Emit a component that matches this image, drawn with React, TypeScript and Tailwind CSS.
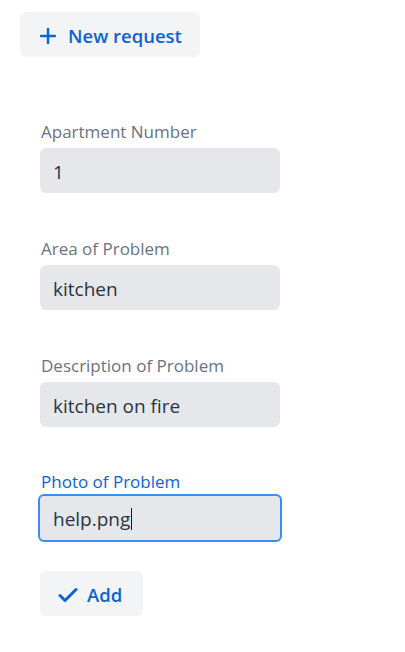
import React from "react";

const fields = [
  { label: "Apartment Number", value: "1" },
  { label: "Area of Problem", value: "kitchen" },
  { label: "Description of Problem", value: "kitchen on fire" },
];

export default function App() {
  return (
    <div className="w-[405px] h-[652px] bg-white" style={{ fontFamily: '"Open Sans", "Noto Sans", sans-serif' }}>
      <div className="pt-3 pl-5">
        <button className="flex items-center h-[45px] w-[180px] rounded-md bg-[#f3f4f6] pl-[20px] pt-[2px] text-[#0b63d6] text-[18.5px] font-semibold">
          <svg width="16" height="16" viewBox="0 0 16 16" className="mr-[12px]">
            <path d="M8 1v14M1 8h14" stroke="#0b63d6" strokeWidth="2.4" strokeLinecap="round" />
          </svg>
          New request
        </button>
      </div>
      <div className="pl-10 pt-[63px] flex flex-col">
        {fields.map((f) => (
          <div key={f.label} className="flex flex-col mb-[44px]">
            <label className="text-[17px] leading-6 text-[#6b7280] pl-[1px]">{f.label}</label>
            <div className="mt-[4px] w-[240px] h-[45px] rounded-md bg-[#e5e7eb] flex items-center pl-[13px] pt-[3px] text-[19px] text-[#2a3442]">
              {f.value}
            </div>
          </div>
        ))}
        <div className="flex flex-col -mt-[2px]">
          <label className="text-[17px] leading-6 text-[#0b63d6] pl-[1px] pt-[1px]">Photo of Problem</label>
          <div className="-ml-[2px] w-[244px] h-[48px] rounded-md bg-[#e5e7eb] border-2 border-[#3b8cf3] flex items-center pl-[13px] pt-[2px] text-[19px] text-[#2a3442]">
            help.png<span className="inline-block w-[1px] h-[22px] bg-[#111827] ml-[1px]" />
          </div>
        </div>
        <button className="mt-[29px] flex items-center h-[45px] w-[103px] rounded-md bg-[#f3f4f6] pl-[18px] pt-[2px] text-[#0b63d6] text-[18.5px] font-semibold">
          <svg width="20" height="16" viewBox="0 0 20 16" className="mr-[9px]">
            <path d="M2 8.5l5 5L18 2.5" stroke="#0b63d6" strokeWidth="3" fill="none" strokeLinecap="round" strokeLinejoin="round" />
          </svg>
          Add
        </button>
      </div>
    </div>
  );
}
